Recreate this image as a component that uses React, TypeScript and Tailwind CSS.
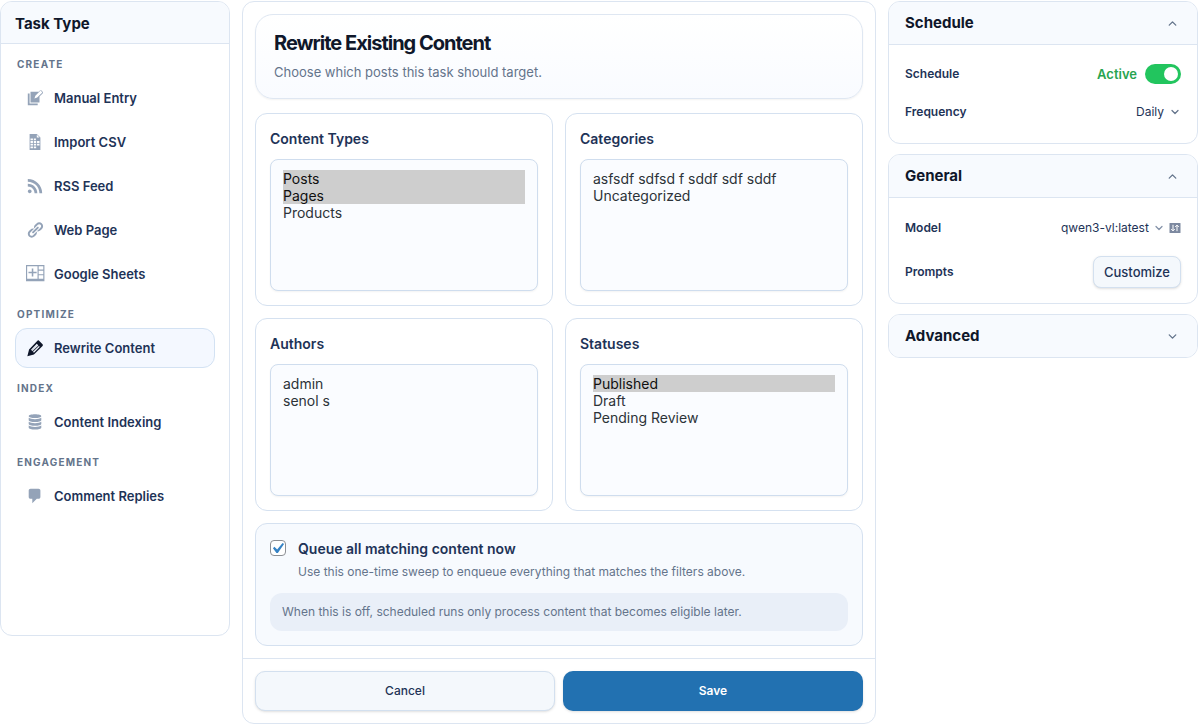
import { useState } from "react";
import type { ReactNode } from "react";
import { ChevronDown, ChevronUp } from "lucide-react";

// サイドバーのアイコン（20x20）
const ICONS: Record<string, string> = {
  manual:
    "M4 5H2v13h11v-2H4V5zM18.700 3.200l-1.500-1.500c-.5-.5-1.200-.5-1.700 0L14.200 3H5v12h10V8.300l3.700-3.600c.4-.4.4-1.100 0-1.500zM12.400 9.500l-3 1 1-3 5.800-5.700 2 2z",
  csv: "M12 1l4 4v14H4V1h8zM12 5h3l-3-3v3zM5 6v2h2.700V6zM8.700 6v2H11V6zM5 9v2h2.700V9zM8.700 9v2h2.600V9zM12.300 9v2H15V9zM5 12v2h2.700v-2zM8.700 12v2h2.600v-2zM12.300 12v2H15v-2zM5 15v2h2.700v-2zM8.700 15v2h2.600v-2z",
  rss: "M14.92 18H18C18 9.32 10.82 2.25 2 2.25v3.02c7.12 0 12.92 5.71 12.92 12.73zm-5.44 0h3.08C12.56 12.27 7.82 7.6 2 7.6v3.02c2 0 3.87.77 5.29 2.16C8.7 14.17 9.48 16.03 9.48 18zm-5.35-.02c1.17 0 2.13-.93 2.13-2.09 0-1.15-.96-2.09-2.13-2.09-1.18 0-2.13.94-2.13 2.09 0 1.16.95 2.09 2.13 2.09z",
  link: "M17.74 2.76c1.68 1.69 1.68 4.41 0 6.1l-1.53 1.52c-1.12 1.12-2.7 1.47-4.14 1.09l2.62-2.61.76-.77.76-.76c.84-.84.84-2.2 0-3.04-.84-.85-2.2-.85-3.04 0l-.77.76-3.38 3.38c-.37-1.44-.02-3.02 1.1-4.14l1.52-1.53c1.69-1.68 4.42-1.68 6.1 0zM8.59 13.43l5.34-5.34c.42-.42.42-1.1 0-1.52-.44-.43-1.13-.39-1.53 0l-5.33 5.34c-.42.42-.42 1.1 0 1.52.44.43 1.13.39 1.52 0zm-.76 2.29l4.14-4.15c.38 1.44.03 3.02-1.09 4.14l-1.52 1.53c-1.69 1.68-4.41 1.68-6.1 0-1.68-1.68-1.68-4.42 0-6.1l1.53-1.52c1.12-1.12 2.7-1.47 4.14-1.1l-4.14 4.15c-.85.84-.85 2.2 0 3.05.84.84 2.2.84 3.04 0z",
  sheets:
    "M6.4 3.776v3.648H2.752v1.792H6.4v3.648h1.728V9.216h3.712V7.424H8.128V3.776zM0 17.92V0h20.48v17.92H0zM12.8 1.28H1.28v14.08H12.8V1.28zm6.4 0h-5.12v3.84h5.12V1.28zm0 5.12h-5.12v3.84h5.12V6.4zm0 5.12h-5.12v3.84h5.12v-3.84z",
  edit: "M14.200 1.700l4.200 4.200c.5.5.5 1.300 0 1.800L8.800 17.200l-7.300 1.900 1.900-7.400 9-9.500c.5-.6 1.300-.9 1.800-.5zM12 5.400L5.600 12l.8.8 6.600-6.400zM14.300 7.700l-6.500 6.500 1 1 6.500-6.600zM13.100 6.500l-6.600 6.500.6.600 6.600-6.500z",
  database:
    "M10 1.500c3.900 0 7 .9 7 2s-3.100 2-7 2-7-.9-7-2 3.100-2 7-2zM3 5.400c1.200 1 4 1.500 7 1.500s5.800-.5 7-1.500V8c0 1.100-3.100 2-7 2s-7-.9-7-2zM3 9.800c1.200 1 4 1.500 7 1.500s5.800-.5 7-1.500v2.400c0 1.100-3.100 2-7 2s-7-.9-7-2zM3 14c1.200 1 4 1.500 7 1.500s5.800-.5 7-1.500v2.400c0 1.100-3.100 2-7 2s-7-.9-7-2z",
  comment:
    "M5 2h9c1.1 0 2 .9 2 2v7c0 1.1-.9 2-2 2h-2l-5 5v-5H5c-1.1 0-2-.9-2-2V4c0-1.1.9-2 2-2z",
};

const GROUPS = [
  {
    label: "Create",
    items: [
      { id: "manual", name: "Manual Entry" },
      { id: "csv", name: "Import CSV" },
      { id: "rss", name: "RSS Feed" },
      { id: "link", name: "Web Page" },
      { id: "sheets", name: "Google Sheets" },
    ],
  },
  { label: "Optimize", items: [{ id: "edit", name: "Rewrite Content" }] },
  { label: "Index", items: [{ id: "database", name: "Content Indexing" }] },
  { label: "Engagement", items: [{ id: "comment", name: "Comment Replies" }] },
];

const FILTERS = [
  { id: "types", title: "Content Types", options: ["Posts", "Pages", "Products"], selected: ["Posts", "Pages"] },
  { id: "categories", title: "Categories", options: ["asfsdf sdfsd f sddf sdf sddf", "Uncategorized"], selected: [] },
  { id: "authors", title: "Authors", options: ["admin", "senol s"], selected: [] },
  { id: "statuses", title: "Statuses", options: ["Published", "Draft", "Pending Review"], selected: ["Published"] },
];

function Section({ title, defaultOpen = false, children }: { title: string; defaultOpen?: boolean; children?: ReactNode }) {
  const [open, setOpen] = useState(defaultOpen);
  const Chevron = open ? ChevronUp : ChevronDown;
  return (
    <section className="overflow-hidden rounded-xl border border-[#dce5f1] bg-white">
      <h2>
        <button
          type="button"
          aria-expanded={open}
          onClick={() => setOpen(!open)}
          className="flex h-[42px] w-full items-center justify-between bg-[#f7fafe] px-4 text-[15px] leading-6 font-bold text-[#0f172a]"
        >
          {title}
          <span className="flex w-[18px] justify-center text-[#64748b]">
            <Chevron size={13} strokeWidth={2.5} />
          </span>
        </button>
      </h2>
      {open && children && <div className="border-t border-[#dce5f1] px-4">{children}</div>}
    </section>
  );
}

function FilterCard({ id, title, options, selected }: { id: string; title: string; options: string[]; selected: string[] }) {
  return (
    <div className="rounded-xl border border-[#d5e1f0] bg-white p-[14px]">
      <label htmlFor={id} className="block text-sm leading-[22px] font-semibold text-[#1e3357]">
        {title}
      </label>
      <select
        id={id}
        multiple
        defaultValue={selected}
        className="mt-[9px] block h-[132px] w-full rounded-lg border border-[#cfddee] bg-[#fafcff] px-3 py-[10px] text-sm text-[#2c3338] shadow-xs"
      >
        {options.map((o) => (
          <option key={o} className="h-[17px] min-h-0 p-0 leading-[17px]">
            {o}
          </option>
        ))}
      </select>
    </div>
  );
}

export default function App() {
  const [active, setActive] = useState("edit");
  const [scheduled, setScheduled] = useState(true);
  const [queueAll, setQueueAll] = useState(true);

  return (
    <div className="grid grid-cols-[230px_minmax(0,1fr)_310px] items-start gap-3 bg-white pt-px font-[Inter,sans-serif]">
      {/* タスク種別 */}
      <aside className="min-h-[635px] overflow-hidden rounded-xl border border-[#dce5f1] bg-white">
        <h2 className="border-b border-[#dce5f1] bg-[#f7fafe] px-[14px] pt-[10px] pb-[7px] text-[15px] leading-6 font-bold text-[#0f172a]">
          Task Type
        </h2>
        <nav className="px-[14px]">
          {GROUPS.map((g) => (
            <div key={g.label}>
              <h3 className="px-0.5 pt-3 pb-1.5 text-[10px] leading-4 font-bold tracking-[0.12em] text-[#64748b] uppercase">
                {g.label}
              </h3>
              <div className="flex flex-col gap-1">
                {g.items.map((item) => (
                  <button
                    key={item.id}
                    type="button"
                    onClick={() => setActive(item.id)}
                    className={`flex h-10 w-full items-center gap-[10px] rounded-xl border px-[10px] text-left text-[13px] leading-5 font-semibold text-[#1e3357] ${
                      item.id === active ? "border-[#d3e2f3] bg-[#f4f8ff]" : "border-transparent"
                    }`}
                  >
                    <svg
                      viewBox="0 0 20 20"
                      fill="currentColor"
                      fillRule="evenodd"
                      className={`size-[18px] shrink-0 overflow-visible ${item.id === active ? "text-[#0f172a]" : "text-[#94a3b8]"}`}
                    >
                      <path d={ICONS[item.id]} />
                    </svg>
                    {item.name}
                  </button>
                ))}
              </div>
            </div>
          ))}
        </nav>
      </aside>

      {/* フォーム本体 */}
      <main className="rounded-xl border border-[#dce5f1] bg-white">
        <div className="p-3">
          <header className="rounded-[18px] border border-[#dfe7f2] bg-linear-to-b from-white to-[#f9fbff] px-[18px] py-4 shadow-xs">
            <h1 className="text-xl leading-6 font-bold tracking-tighter text-[#0f172a]">Rewrite Existing Content</h1>
            <p className="mt-[7px] text-[13px] leading-5 text-[#64748b]">Choose which posts this task should target.</p>
          </header>

          <div className="mt-[14px] grid grid-cols-2 gap-3">
            {FILTERS.map((f) => (
              <FilterCard key={f.id} {...f} />
            ))}
          </div>

          <div className="mt-3 rounded-xl border border-[#d5e1f0] bg-[#f7fafe] p-[14px]">
            <div className="flex gap-3">
              <span className="relative mt-0.5 size-4 shrink-0">
                <input
                  id="queue-all"
                  type="checkbox"
                  checked={queueAll}
                  onChange={(e) => setQueueAll(e.target.checked)}
                  className="peer block size-4 appearance-none rounded border border-[#8c8f94] bg-white"
                />
                <svg
                  viewBox="3 2 15 15"
                  className="pointer-events-none absolute inset-0 hidden size-4 fill-[#3582c4] peer-checked:block"
                >
                  <path d="M14.83 4.89l1.34.94-5.81 8.38H9.02L5.78 9.67l1.34-1.25 2.57 2.4z" />
                </svg>
              </span>
              <div>
                <label htmlFor="queue-all" className="block text-sm leading-[22px] font-semibold text-[#1e3357]">
                  Queue all matching content now
                </label>
                <p className="mt-0.5 text-xs leading-5 text-[#64748b]">
                  Use this one-time sweep to enqueue everything that matches the filters above.
                </p>
              </div>
            </div>
            <p className="mt-[11px] rounded-xl bg-[#e9eff8] px-3 py-[9px] text-xs leading-5 text-[#64748b]">
              When this is off, scheduled runs only process content that becomes eligible later.
            </p>
          </div>
        </div>

        <footer className="grid grid-cols-2 gap-2 border-t border-[#dce5f1] p-3">
          <button
            type="button"
            className="h-10 rounded-[10px] border border-[#d3e0ef] bg-[#f4f8fc] text-xs font-medium text-[#1e3357] shadow-sm"
          >
            Cancel
          </button>
          <button type="button" className="h-10 rounded-[10px] bg-[#2271b1] text-xs font-semibold text-white shadow-sm">
            Save
          </button>
        </footer>
      </main>

      {/* 設定 */}
      <div className="flex flex-col gap-[10px]">
        <Section title="Schedule" defaultOpen>
          <div className="pt-[10px] pb-3 text-xs font-semibold text-[#1e3357]">
            <div className="flex h-[38px] items-center justify-between">
              <label htmlFor="schedule">Schedule</label>
              <div className="flex items-center gap-2">
                <span className="text-[13px] leading-5 text-[#28a450]">{scheduled ? "Active" : "Paused"}</span>
                <input
                  id="schedule"
                  type="checkbox"
                  role="switch"
                  checked={scheduled}
                  onChange={(e) => setScheduled(e.target.checked)}
                  className="flex h-5 w-9 appearance-none items-center rounded-full bg-slate-300 px-[3px] before:size-[14px] before:rounded-full before:bg-white checked:justify-end checked:bg-[#22c55e]"
                />
              </div>
            </div>
            <div className="flex h-[38px] items-center justify-between">
              <label htmlFor="frequency">Frequency</label>
              <div className="flex items-center gap-1">
                <select id="frequency" className="appearance-none bg-transparent font-normal">
                  <option>Daily</option>
                </select>
                <ChevronDown size={12} strokeWidth={2.5} className="text-[#64748b]" />
              </div>
            </div>
          </div>
        </Section>

        <Section title="General" defaultOpen>
          <div className="pt-2 pb-[9px] text-xs font-semibold text-[#1e3357]">
            <div className="flex h-11 items-center justify-between">
              <label htmlFor="model">Model</label>
              <div className="flex items-center gap-1">
                <select id="model" className="appearance-none bg-transparent font-normal">
                  <option>qwen3-vl:latest</option>
                </select>
                <ChevronDown size={12} strokeWidth={2.5} className="text-[#8492a8]" />
                <button type="button" aria-label="Sync models">
                  <svg viewBox="0 0 12 12" className="size-3">
                    <rect x="0.5" y="1" width="11" height="10" rx="0.5" fill="#7d89a0" />
                    <path d="M4 2.8v6M2.2 7l1.8 1.9L5.800 7M8 9.2v-6M6.2 5L8 3.1 9.8 5" fill="none" stroke="#fff" />
                  </svg>
                </button>
              </div>
            </div>
            <div className="flex h-11 items-center justify-between">
              <span>Prompts</span>
              <button
                type="button"
                className="h-8 rounded-lg border border-[#d3e0ef] bg-[#f4f8fc] px-[10px] text-[13px] leading-5 font-medium shadow-sm"
              >
                Customize
              </button>
            </div>
          </div>
        </Section>

        <Section title="Advanced" />
      </div>
    </div>
  );
}
